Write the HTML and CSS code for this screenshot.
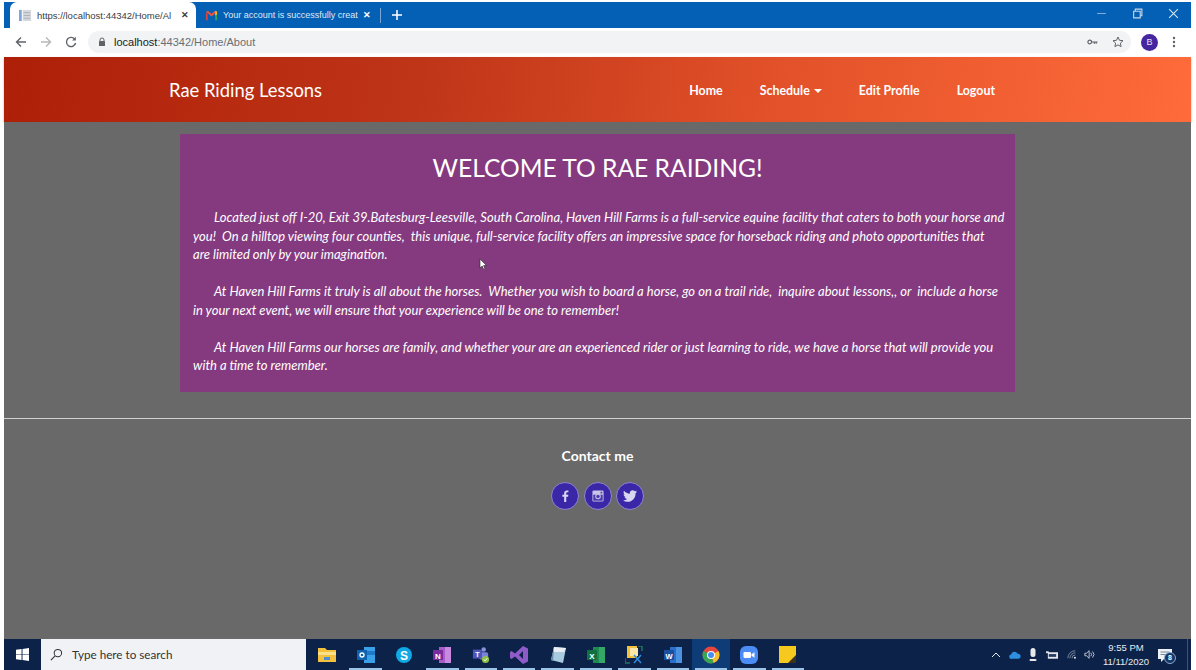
FILE: index.html
```html
<!DOCTYPE html>
<html lang="en">
<head>
<meta charset="utf-8">
<title>Rae Riding Lessons</title>
<link rel="stylesheet" href="styles.css">
</head>
<body>
<div class="screen">
  <div class="tabbar">
    <div class="tab tab-active">
      <svg class="fav" viewBox="0 0 14 14"><rect x="0" y="1" width="3" height="12" fill="#7fa8d8"/><rect x="4" y="1" width="9" height="12" fill="#d5d8dd"/><path d="M5 4h7M5 7h7M5 10h7" stroke="#aab0b8"/></svg>
      <span class="tab-title">https://localhost:44342/Home/Al</span>
      <span class="tab-x">✕</span>
    </div>
    <div class="tab tab-other">
      <svg class="fav" viewBox="0 0 14 14"><path d="M1 3v9h2V6z" fill="#d9423a"/><path d="M13 3v9h-2V6z" fill="#3f9f58"/><path d="M1 3l6 5 6-5-2-1-4 3-4-3z" fill="#e8533f"/><path d="M11 2l2 1v3l-2 1z" fill="#f2bd2d"/></svg>
      <span class="tab-title tab-title-light">Your account is successfully creat</span>
      <span class="tab-x tab-x-light">✕</span>
    </div>
    <span class="tab-sep"></span>
    <svg class="plus" viewBox="0 0 10 10"><path d="M5 0v10M0 5h10" stroke="#fff" stroke-width="1.5"/></svg>
    <div class="win-controls">
      <svg class="win" viewBox="0 0 10 10"><path d="M1 5h8" stroke="#7fa9d6"/></svg>
      <svg class="win" viewBox="0 0 10 10"><path d="M1.5 3h6v6h-6zM3 3V1h6v6H7.5" fill="none" stroke="#c5d8ec"/></svg>
      <svg class="win" viewBox="0 0 10 10"><path d="M1 1l8 8M9 1l-8 8" stroke="#d5e3f2"/></svg>
    </div>
  </div>
  <div class="toolbar">
    <svg class="tool" viewBox="0 0 12 12"><path d="M11 6H2M6 1.5L1.5 6 6 10.5" fill="none" stroke="#5f6368" stroke-width="1.4"/></svg>
    <svg class="tool" viewBox="0 0 12 12"><path d="M1 6h9M6 1.5L10.5 6 6 10.5" fill="none" stroke="#b5b8bc" stroke-width="1.4"/></svg>
    <svg class="tool" viewBox="0 0 12 12"><path d="M10 3.5A4.6 4.6 0 1 0 10.6 7" fill="none" stroke="#5f6368" stroke-width="1.4"/><path d="M10.8 .8v3.7H7.1z" fill="#5f6368"/></svg>
    <div class="omnibox">
      <svg class="lock" viewBox="0 0 8 10"><path d="M2 4V3a2 2 0 0 1 4 0v1" fill="none" stroke="#5f6368"/><rect x="1" y="4" width="6" height="5" rx=".6" fill="#5f6368"/></svg>
      <span class="url">localhost<span class="url-dim">:44342/Home/About</span></span>
      <svg class="omni-icon key" viewBox="0 0 12 8"><circle cx="3" cy="4" r="2" fill="none" stroke="#5f6368" stroke-width="1.3"/><path d="M5 4h6.500M8 4v2M10 4v2" stroke="#5f6368" stroke-width="1.300"/></svg>
      <svg class="omni-icon star" viewBox="0 0 12 12"><path d="M6 1l1.500 3.300 3.500.4-2.600 2.400.7 3.500L6 8.900l-3.100 1.700.7-3.500L1 4.700l3.500-.4z" fill="none" stroke="#5f6368"/></svg>
    </div>
    <span class="avatar">B</span>
    <svg class="menu-dots" viewBox="0 0 4 12"><circle cx="2" cy="2" r="1.200" fill="#5f6368"/><circle cx="2" cy="6" r="1.200" fill="#5f6368"/><circle cx="2" cy="10" r="1.200" fill="#5f6368"/></svg>
  </div>
  <header class="site-nav">
    <a class="brand">Rae Riding Lessons</a>
    <nav class="nav-links">
      <a class="nav-link">Home</a>
      <a class="nav-link">Schedule <span class="caret"></span></a>
      <a class="nav-link">Edit Profile</a>
      <a class="nav-link">Logout</a>
    </nav>
  </header>
  <main class="page">
    <section class="card">
      <h1 class="card-title">WELCOME TO RAE RAIDING!</h1>
      <p class="para">Located just off I-20, Exit 39.Batesburg-Leesville, South Carolina, Haven Hill Farms is a full-service equine facility that caters to both your horse and you!&nbsp; On a hilltop viewing four counties,&nbsp; this unique, full-service facility offers an impressive space for horseback riding and photo opportunities that<br>are limited only by your imagination.</p>
      <p class="para">At Haven Hill Farms it truly is all about the horses.&nbsp; Whether you wish to board a horse, go on a trail ride,&nbsp; inquire about lessons,, or&nbsp; include a horse in your next event, we will ensure that your experience will be one to remember!</p>
      <p class="para">At Haven Hill Farms our horses are family, and whether your are an experienced rider or just learning to ride, we have a horse that will provide you with a time to remember.</p>
    </section>
    <svg class="cursor" viewBox="0 0 8 12"><path d="M1 0v9l2.200-2 1.500 3.500 1.300-.6L4.600 6.500H7.500z" fill="#fff" stroke="#222" stroke-width=".6"/></svg>
    <hr class="rule">
    <footer class="contact">
      <h2 class="contact-title">Contact me</h2>
      <div class="socials">
        <a class="social"><svg viewBox="1 0 9 16" width="7" height="12"><path d="M6.500 16V9h2.400l.4-2.800H6.500V4.500c0-.8.3-1.400 1.400-1.400h1.500V.6C9.100.5 8.300.5 7.300.5 5.200.5 3.700 1.800 3.700 4.200v2H1.300V9h2.400v7z" fill="#d9d6f0"/></svg></a>
        <a class="social"><svg viewBox="0 0 14 14" width="12" height="12"><rect x=".5" y=".5" width="13" height="13" rx="1.500" fill="#c9c5e6"/><rect x="1.500" y="5.500" width="11" height="7" fill="#4c3cae"/><circle cx="7" cy="7.500" r="3.200" fill="#c9c5e6"/><circle cx="7" cy="7.500" r="2" fill="#4c3cae"/><rect x="10" y="2" width="2" height="2" fill="#4c3cae"/></svg></a>
        <a class="social"><svg viewBox="0 0 24 20" width="14" height="12"><path d="M24 2.400c-.9.400-1.800.7-2.800.8 1-.6 1.800-1.600 2.200-2.700-1 .6-2 1-3.100 1.200C19.300.7 18 0 16.600 0c-2.700 0-4.900 2.200-4.900 4.900 0 .4 0 .8.100 1.100C7.700 5.800 4.100 3.800 1.700.9 1.200 1.600 1 2.500 1 3.400c0 1.700.9 3.200 2.200 4.100-.8 0-1.600-.2-2.200-.6v.1c0 2.400 1.700 4.400 3.900 4.800-.7.200-1.500.2-2.200.1.600 2 2.400 3.400 4.600 3.400A9.900 9.900 0 0 1 0 17.800 14 14 0 0 0 7.500 20c9.100 0 14-7.500 14-14v-.6c1-.7 1.800-1.600 2.500-3z" fill="#d9d6f0"/></svg></a>
      </div>
    </footer>
  </main>
  <div class="taskbar">
    <svg class="start" viewBox="0 0 14 14"><path d="M0 2l6-.9V6.600H0zM7 1l7-1v6.600H7zM0 7.400h6v5.500l-6-.9zM7 7.400h7V14l-7-1z" fill="#fff"/></svg>
    <div class="search">
      <svg class="search-ic" viewBox="0 0 14 14"><circle cx="8.500" cy="5.500" r="4" fill="none" stroke="#333" stroke-width="1.100"/><path d="M5.500 8.500L1 13" stroke="#333" stroke-width="1.200"/></svg>
      <span class="search-text">Type here to search</span>
    </div>
    <div class="apps">
      <span class="app"><svg viewBox="0 0 18 16"><path d="M0 1h7l2 2h9v12H0z" fill="#f3c13e"/><path d="M0 5h18v3H0z" fill="#fbe08a"/><rect x="6" y="10" width="6" height="3" fill="#4a8fd6"/></svg></span>
      <span class="app run"><svg viewBox="0 0 18 16"><rect x="7" y="0" width="11" height="16" fill="#3aa0e8"/><rect x="7" y="4" width="11" height="4" fill="#1f78c8"/><rect x="0" y="3" width="10" height="10" fill="#0f62ae"/><circle cx="5" cy="8" r="2" fill="none" stroke="#fff" stroke-width="1.300"/></svg></span>
      <span class="app"><svg viewBox="0 0 18 18"><circle cx="9" cy="9" r="8" fill="#11a8e6"/><text x="9" y="13.500" class="app-letter" font-size="12">S</text></svg></span>
      <span class="app run"><svg viewBox="0 0 18 16"><rect x="6" y="0" width="12" height="16" fill="#a85cc8"/><rect x="12" y="0" width="6" height="16" fill="#c88ae0"/><rect x="0" y="3" width="10" height="10" fill="#7a2ba0"/><text x="5" y="11.500" class="app-letter" font-size="8">N</text></svg></span>
      <span class="app run"><svg viewBox="0 0 20 18"><circle cx="13" cy="3" r="2.500" fill="#8a90dc"/><rect x="8" y="6" width="10" height="8" rx="2" fill="#7b83d8"/><rect x="1" y="3" width="10" height="10" fill="#4f55b8"/><text x="6" y="11.500" class="app-letter" font-size="8">T</text><circle cx="15" cy="14" r="4" fill="#8fc046"/><path d="M13 14l1.500 1.500 2.500-3" fill="none" stroke="#fff"/></svg></span>
      <span class="app run"><svg viewBox="0 0 18 18"><path d="M13 0l5 2.500v13L13 18 5 10.500 1.500 13 0 12V6l1.500-1L5 7.500zM13 5l-4 4 4 4z" fill="#8e5bc8"/></svg></span>
      <span class="app run"><svg viewBox="0 0 18 18"><path d="M5 1l12 1-3 15-12-3z" fill="#a8cbe0"/><path d="M5 1l12 1-2 4H4z" fill="#e8eef2"/><path d="M2 14l3-13-1 14z" fill="#5f8aa8"/></svg></span>
      <span class="app run"><svg viewBox="0 0 18 16"><rect x="6" y="0" width="12" height="16" fill="#1f8a50"/><rect x="12" y="0" width="6" height="16" fill="#33a868"/><rect x="0" y="3" width="10" height="10" fill="#107040"/><text x="5" y="11.500" class="app-letter" font-size="8">X</text></svg></span>
      <span class="app run"><svg viewBox="0 0 18 18"><rect x="2" y="0" width="10" height="12" fill="#f3c13e"/><rect x="5" y="2" width="8" height="8" fill="#fbe6a8"/><path d="M9 9l7 8M16 9l-7 8" stroke="#2f8ce0" stroke-width="1.500"/><path d="M0 12v5h5M17 5V0h-4" fill="none" stroke="#2e9a60"/></svg></span>
      <span class="app run"><svg viewBox="0 0 18 16"><rect x="6" y="0" width="12" height="16" fill="#2b6fc8"/><rect x="12" y="0" width="6" height="16" fill="#4b92e0"/><rect x="0" y="3" width="10" height="10" fill="#1a4fa0"/><text x="5" y="11.500" class="app-letter" font-size="7.500">W</text></svg></span>
      <span class="app app-active run"><svg viewBox="0 0 18 18"><circle cx="9" cy="9" r="8.500" fill="#e8453c"/><path d="M9 9L16.500 5a8.500 8.500 0 0 1-5 12z" fill="#f7c02c"/><path d="M9 9l2.500 8A8.500 8.500 0 0 1 1.500 5z" fill="#35a853"/><circle cx="9" cy="9" r="4" fill="#fff"/><circle cx="9" cy="9" r="3" fill="#4a8cf0"/></svg></span>
      <span class="app run"><svg viewBox="0 0 18 18"><rect width="18" height="18" rx="6" fill="#4c8df5"/><rect x="3.500" y="6" width="7.500" height="6" rx="1.200" fill="#fff"/><path d="M11.500 8.200l3-2v5.600l-3-2z" fill="#fff"/></svg></span>
      <span class="app run"><svg viewBox="0 0 18 18"><rect width="17" height="17" fill="#f7c81e"/><path d="M17 9v8H9z" fill="#3b3320"/></svg></span>
    </div>
    <div class="tray">
      <svg class="tray-ic chev" viewBox="0 0 10 6"><path d="M1 5l4-4 4 4" fill="none" stroke="#e8edf4"/></svg>
      <svg class="tray-ic cloud" viewBox="0 0 14 9"><path d="M3 9a2.500 2.500 0 0 1-.5-5A4 4 0 0 1 10 3a3 3 0 0 1 1 6z" fill="#2d8fe0"/></svg>
      <svg class="tray-ic mic" viewBox="0 0 8 14"><rect x="1.500" y="0" width="5" height="9" rx="2.500" fill="#e6e8ec"/><rect x=".5" y="11" width="7" height="2" rx="1" fill="#e6e8ec"/></svg>
      <svg class="tray-ic batt" viewBox="0 0 13 8"><rect x="2" y="1" width="11" height="7" fill="#e6e8ec"/><rect x="0" y="0" width="3" height="2" fill="#e6e8ec"/><rect x="3" y="3" width="8" height="3" fill="#233c63"/></svg>
      <svg class="tray-ic wifi" viewBox="0 0 12 11"><path d="M1 10a9 9 0 0 1 9-9M3.500 10A6.500 6.500 0 0 1 10 3.500M6 10a4 4 0 0 1 4-4" fill="none" stroke="#8e9aad"/><circle cx="9.500" cy="9.500" r="1.200" fill="#e6e8ec"/></svg>
      <svg class="tray-ic vol" viewBox="0 0 14 11"><path d="M1 4h2l3-3v9L3 7H1z" fill="none" stroke="#d5dae2"/><path d="M8 3.500a3 3 0 0 1 0 4M10 2a5 5 0 0 1 0 7" fill="none" stroke="#d5dae2"/></svg>
      <div class="clock"><span>9:55 PM</span><span>11/11/2020</span></div>
      <div class="notif">
        <svg viewBox="0 0 14 13" width="14" height="13"><path d="M0 0h14v10H6l-3 3v-3H0z" fill="#eef1f5"/><path d="M2.500 3h9M2.500 5.500h9" stroke="#7b889c"/></svg>
        <span class="notif-badge">8</span>
      </div>
      <span class="show-desktop"></span>
    </div>
  </div>
</div>
</body>
</html>
```

FILE: styles.css
```css
* { box-sizing: border-box; }
html, body { margin: 0; height: 100%; background: #fff; overflow: hidden; }
body { padding: 2px 5px 0 4px; font-family: "Lato", "Liberation Sans", sans-serif; }
.screen { width: 1187px; height: 668px; display: flex; flex-direction: column; }

.tabbar { height: 26px; background: #0460b5; display: flex; align-items: flex-end; flex: none; }
.tab { display: flex; align-items: center; font-family: "Liberation Sans", sans-serif; font-size: 9px; height: 26px; }
.tab-active { width: 186px; margin-left: 6px; padding: 0 7px 0 9px; background: #fff; border-radius: 7px 7px 0 0; font-size: 9.500px; }
.tab-other { width: 184px; padding: 0 9px 0 9px; }
.fav { width: 13px; height: 13px; flex: none; margin-right: 5px; }
.tab-title { flex: 1; overflow: hidden; white-space: nowrap; color: #3c4043; }
.tab-title-light { color: #dfe9f5; }
.tab-x { font-size: 9px; color: #3c4043; font-weight: 700; }
.tab-x-light { color: #fff; }
.tab-sep { width: 1px; height: 15px; background: #7aa6d6; margin-bottom: 5px; }
.plus { width: 10px; height: 10px; margin: 0 0 8px 11px; }
.win-controls { margin-left: auto; align-self: stretch; display: flex; align-items: center; gap: 25px; padding: 0 12px 3px 0; }
.win { width: 11px; height: 11px; }

.toolbar { height: 29px; background: #fff; display: flex; align-items: center; padding: 0 10px 1px 11px; flex: none; }
.tool { width: 12px; height: 12px; margin-right: 13px; }
.omnibox { width: 1043px; height: 22px; margin-left: -2px; background: #f1f3f4; border-radius: 11px; display: flex; align-items: center; padding: 0 7px 0 10px; }
.lock { width: 8px; height: 10px; margin-right: 8px; }
.url { font-family: "Liberation Sans", sans-serif; font-size: 11px; color: #202124; flex: 1; }
.url-dim { color: #6b6f74; }
.omni-icon { flex: none; }
.key { width: 11px; height: 8px; margin-right: 14px; }
.star { width: 12px; height: 12px; }
.avatar { width: 17px; height: 17px; margin-left: 10px; border-radius: 50%; background: #4527a0; color: #e8e4f5; font: 9px/17px "Liberation Sans", sans-serif; text-align: center; flex: none; }
.menu-dots { width: 4px; height: 12px; margin-left: 14px; flex: none; }

.site-nav { height: 65px; flex: none; display: flex; align-items: center; padding: 2px 196px 0 165px; background: linear-gradient(100deg, #ae1f08 0%, #bf3518 35%, #e25129 65%, #ff6b3a 100%); box-shadow: 0 1px 2px rgba(0,0,0,.3); position: relative; }
.brand { font-size: 18.400px; color: #fff; margin-bottom: 2px; }
.nav-links { margin-left: auto; display: flex; gap: 37px; }
.nav-link { font-size: 12.400px; font-weight: 700; color: #fff; white-space: nowrap; }
.caret { display: inline-block; margin-left: 1px; vertical-align: 2px; border-top: 4px solid #fff; border-left: 4px solid transparent; border-right: 4px solid transparent; }

.page { flex: 1; background: #696969; display: flex; flex-direction: column; padding-top: 12px; position: relative; }
.card { width: 835px; height: 258px; margin-left: 176px; padding: 17px 13px 0; background: #853a80; color: #fff; flex: none; }
.card-title { margin: 0 0 24px; font-size: 24.600px; line-height: 33px; font-weight: 400; text-align: center; }
.para { margin: 0 -5px 18.500px 0; font-size: 13px; line-height: 18.500px; font-style: italic; text-indent: 21px; color: #fff; }
.cursor { position: absolute; left: 475px; top: 137px; width: 8px; height: 12px; }
.rule { margin: 26px 0 0; border: 0; border-top: 1px solid #d0d0d0; height: 0; flex: none; }
.contact { padding-top: 28px; text-align: center; }
.contact-title { margin: 0 0 18px; font-size: 14px; line-height: 17px; font-weight: 700; color: #fff; }
.socials { display: flex; justify-content: center; gap: 4.500px; }
.social { width: 28px; height: 28px; border-radius: 50%; border: 1px solid #8f86d0; background: #3a27a8; display: flex; align-items: center; justify-content: center; }

.taskbar { height: 31px; flex: none; background: #0c2249; display: flex; align-items: stretch; }
.start { width: 13px; height: 13px; margin: 9px 12px 0 12px; flex: none; }
.search { width: 265px; background: #f1f2f6; display: flex; align-items: center; padding: 0 0 1px 9px; flex: none; }
.search-ic { width: 13px; height: 13px; margin-right: 9px; }
.search-text { font-size: 11.700px; color: #333; }
.apps { display: flex; margin-left: 2px; }
.app { width: 38.400px; display: flex; align-items: center; justify-content: center; position: relative; }
.app svg { width: 18px; height: 18px; }
.app-active { background: #0e3c76; }
.run::after { content: ""; position: absolute; left: 3px; right: 3px; bottom: 0; height: 2px; background: #9cc3e8; }
.app-letter { fill: #fff; font-family: "Liberation Sans", sans-serif; font-weight: 700; text-anchor: middle; }
.tray { margin-left: auto; display: flex; align-items: center; padding-right: 3px; }
.tray-ic { flex: none; }
.chev { width: 10px; height: 6px; margin-right: 8px; }
.cloud { width: 12px; height: 8px; margin-right: 8px; }
.mic { width: 8px; height: 14px; margin-right: 9px; }
.batt { width: 12px; height: 8px; margin-right: 9px; }
.wifi { width: 10px; height: 11px; margin-right: 7px; }
.vol { width: 12px; height: 11px; margin-right: 4px; }
.clock { display: flex; flex-direction: column; align-items: center; font: 9.500px/14px "Liberation Sans", sans-serif; color: #e6eaf0; width: 52px; }
.notif { position: relative; margin-left: 6px; width: 18px; height: 18px; }
.notif-badge { position: absolute; right: 0; bottom: 0; width: 12px; height: 12px; border-radius: 50%; background: #14386a; border: 1px solid #8ea6c6; color: #fff; font: 700 7px/10px "Liberation Sans", sans-serif; text-align: center; }
.show-desktop { width: 1px; height: 100%; background: #3d5274; margin-left: 11px; }
```
